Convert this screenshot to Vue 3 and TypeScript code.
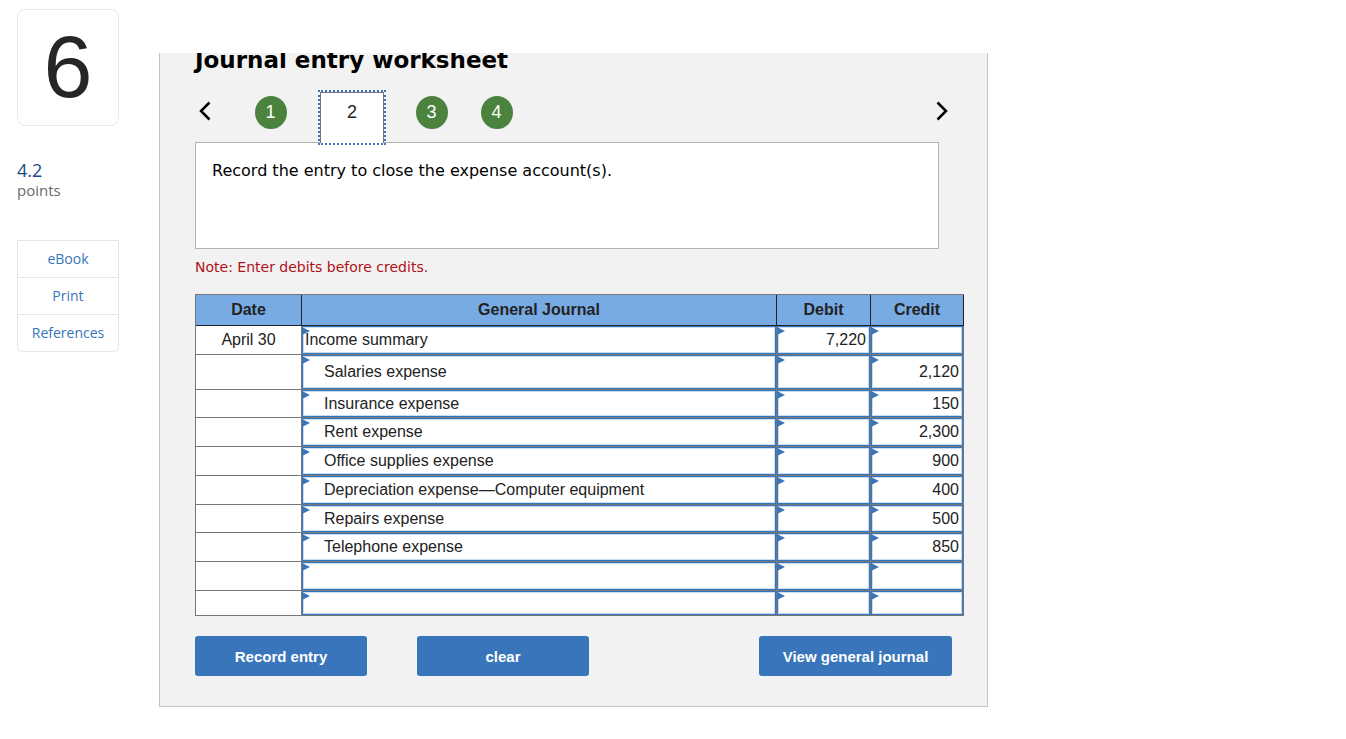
<script setup lang="ts">
import { ref } from 'vue'

interface Line {
  date: string
  account: string
  debit: string
  credit: string
  indent?: boolean
  size?: 'tall' | 'snug' | 'short'
}

const steps = [1, 2, 3, 4]
const current = ref(2)

const lines = ref<Line[]>([
  { date: 'April 30', account: 'Income summary', debit: '7,220', credit: '' },
  { date: '', account: 'Salaries expense', debit: '', credit: '2,120', indent: true, size: 'tall' },
  { date: '', account: 'Insurance expense', debit: '', credit: '150', indent: true, size: 'snug' },
  { date: '', account: 'Rent expense', debit: '', credit: '2,300', indent: true },
  { date: '', account: 'Office supplies expense', debit: '', credit: '900', indent: true },
  { date: '', account: 'Depreciation expense—Computer equipment', debit: '', credit: '400', indent: true },
  { date: '', account: 'Repairs expense', debit: '', credit: '500', indent: true, size: 'snug' },
  { date: '', account: 'Telephone expense', debit: '', credit: '850', indent: true },
  { date: '', account: '', debit: '', credit: '' },
  { date: '', account: '', debit: '', credit: '', size: 'short' },
])

function clearLines() {
  for (const line of lines.value) {
    line.account = ''
    line.debit = ''
    line.credit = ''
  }
}

function move(by: number) {
  current.value = Math.min(steps.length, Math.max(1, current.value + by))
}
</script>

<template>
  <div class="page">
    <aside class="side">
      <div class="question">6</div>
      <div class="score">4.2</div>
      <div class="points">points</div>
      <nav class="links">
        <a href="#ebook">eBook</a>
        <a href="#print">Print</a>
        <a href="#references">References</a>
      </nav>
    </aside>

    <main class="panel">
      <h1>Journal entry worksheet</h1>

      <div class="steps">
        <button class="arrow" type="button" aria-label="Previous entry" @click="move(-1)">
          <svg width="12" height="20" viewBox="0 0 12 20"><path d="M10.5 1.5 L2 10 L10.5 18.5" /></svg>
        </button>
        <div class="tabs">
          <button
            v-for="n in steps"
            :key="n"
            type="button"
            class="step"
            :class="{ active: n === current }"
            @click="current = n"
          >
            <span>{{ n }}</span>
          </button>
        </div>
        <button class="arrow" type="button" aria-label="Next entry" @click="move(1)">
          <svg width="12" height="20" viewBox="0 0 12 20"><path d="M1.5 1.5 L10 10 L1.5 18.5" /></svg>
        </button>
      </div>

      <p class="task">Record the entry to close the expense account(s).</p>
      <p class="note">Note: Enter debits before credits.</p>

      <table>
        <colgroup>
          <col class="c-date" />
          <col />
          <col class="c-debit" />
          <col class="c-credit" />
        </colgroup>
        <thead>
          <tr>
            <th scope="col">Date</th>
            <th scope="col">General Journal</th>
            <th scope="col">Debit</th>
            <th scope="col">Credit</th>
          </tr>
        </thead>
        <tbody>
          <tr v-for="(line, i) in lines" :key="i" :class="line.size">
            <td>{{ line.date }}</td>
            <td class="entry">
              <input v-model="line.account" type="text" :class="{ indent: line.indent }" :aria-label="`Account, line ${i + 1}`" />
            </td>
            <td class="entry amount">
              <input v-model="line.debit" type="text" :aria-label="`Debit, line ${i + 1}`" />
            </td>
            <td class="entry amount">
              <input v-model="line.credit" type="text" :aria-label="`Credit, line ${i + 1}`" />
            </td>
          </tr>
        </tbody>
      </table>

      <div class="actions">
        <button type="button">Record entry</button>
        <button type="button" @click="clearLines">clear</button>
        <button type="button" class="view">View general journal</button>
      </div>
    </main>
  </div>
</template>

<style>
body {
  margin: 0;
  background: #fff;
}
</style>

<style scoped>
* {
  box-sizing: border-box;
}

.page {
  display: flex;
  align-items: flex-start;
  gap: 40px;
  padding: 9px 17px 32px;
  font-family: 'Liberation Sans', Arial, sans-serif;
  font-size: 16px;
  color: #222;
}

.side {
  flex: 0 0 102px;
  font-family: 'Open Sans', sans-serif;
  font-size: 14px;
  line-height: 20px;
}

.question {
  height: 117px;
  border: 1px solid #eaeaea;
  border-radius: 8px;
  font-family: 'Liberation Sans', Arial, sans-serif;
  font-size: 88px;
  line-height: 113px;
  text-align: center;
  color: #262626;
}

.score {
  margin-top: 34px;
  font-size: 18px;
  color: #184a8a;
}

.points {
  font-size: 15px;
  color: #6b6b6b;
}

.links {
  display: flex;
  flex-direction: column;
  margin-top: 40px;
  border: 1px solid #e6e6e6;
  border-radius: 0 0 6px 6px;
}

.links a {
  height: 36px;
  line-height: 35px;
  text-align: center;
  text-decoration: none;
  color: #3875bb;
}

.links a + a {
  height: 37px;
  border-top: 1px solid #e6e6e6;
}

.panel {
  flex: 1 1 auto;
  max-width: 829px;
  margin-top: 44px;
  padding: 0 23px 30px 35px;
  border: 1px solid #c3c3c3;
  border-top: 0;
  background: #f2f2f2;
  overflow: hidden;
}

h1 {
  margin: -8px 0 16px;
  font-family: 'DejaVu Sans', Verdana, sans-serif;
  font-size: 23px;
  line-height: 30px;
  color: #000;
}

.steps {
  display: flex;
  align-items: flex-start;
  margin-right: 12px;
  padding: 0 4px;
}

.arrow {
  margin-top: 10px;
  padding: 0;
  border: 0;
  background: none;
  height: 20px;
}

.arrow svg {
  display: block;
  fill: none;
  stroke: #000;
  stroke-width: 2.5;
}

.tabs {
  flex: 1;
  display: flex;
  padding-left: 27px;
}

.step {
  width: 65px;
  height: 52px;
  padding: 5px 0 0;
  border: 0;
  background: none;
  font: 18px/32px 'Liberation Sans', Arial, sans-serif;
  color: #fff;
  display: flex;
  justify-content: center;
}

.step span {
  width: 32px;
  height: 33px;
  border-radius: 50%;
  background: #4b833e;
}

.step.active {
  position: relative;
  margin: 1px 15px 0 17px;
  width: 64px;
  height: 51px;
  padding-top: 3px;
  border: 1px solid #777;
  border-bottom: 0;
  background: #fff;
  color: #222;
  outline: 2px dotted #3875bb;
}

.step.active span {
  background: none;
}

.task {
  margin: -1px 25px 0 0;
  min-height: 107px;
  padding: 16px;
  border: 1px solid #b3b3b3;
  background: #fff;
  font-family: 'DejaVu Sans', Verdana, sans-serif;
  line-height: 24px;
  color: #000;
}

.note {
  margin: 8px 0 17px;
  font-family: 'DejaVu Sans', Verdana, sans-serif;
  font-size: 14px;
  line-height: 20px;
  color: #b01117;
}

table {
  width: 100%;
  table-layout: fixed;
  border-collapse: separate;
  border-spacing: 0;
  border: solid #777;
  border-width: 1px 0 0 1px;
  background: #fff;
}

.c-date {
  width: 106px;
}

.c-debit {
  width: 94px;
}

.c-credit {
  width: 93px;
}

th {
  height: 31px;
  padding: 0;
  border: solid #222;
  border-width: 0 1px 1px 0;
  background: #78abe4;
  font-weight: bold;
}

td {
  height: 29px;
  padding: 0;
  border: solid #777;
  border-width: 0 1px 1px 0;
  text-align: center;
}

.entry {
  position: relative;
}

.entry::before {
  content: '';
  position: absolute;
  top: 1px;
  left: 0;
  border: 4px solid transparent;
  border-left: 8px solid #3875bb;
  border-right: 0;
}

input {
  display: block;
  width: 100%;
  height: 28px;
  padding: 0 3px;
  border: 1px solid #3875bb;
  border-radius: 0;
  box-shadow: inset 0 0 0 1px #c9dcf0;
  background: #fff;
  font: inherit;
  color: #222;
}

.entry input {
  padding-left: 2px;
}

.entry .indent {
  padding-left: 21px;
}

.amount input {
  text-align: right;
}

.tall td {
  height: 35px;
}

.tall input {
  height: 34px;
}

.snug td {
  height: 28px;
}

.snug input {
  height: 27px;
}

.short td {
  height: 25px;
}

.short input {
  height: 24px;
}

.actions {
  display: flex;
  gap: 50px;
  margin: 20px 12px 0 0;
}

.actions button {
  width: 172px;
  height: 40px;
  border: 0;
  border-radius: 3px;
  background: #3875bb;
  font: bold 15px 'Liberation Sans', Arial, sans-serif;
  color: #fff;
}

.actions .view {
  width: 193px;
  margin-left: auto;
}
</style>
